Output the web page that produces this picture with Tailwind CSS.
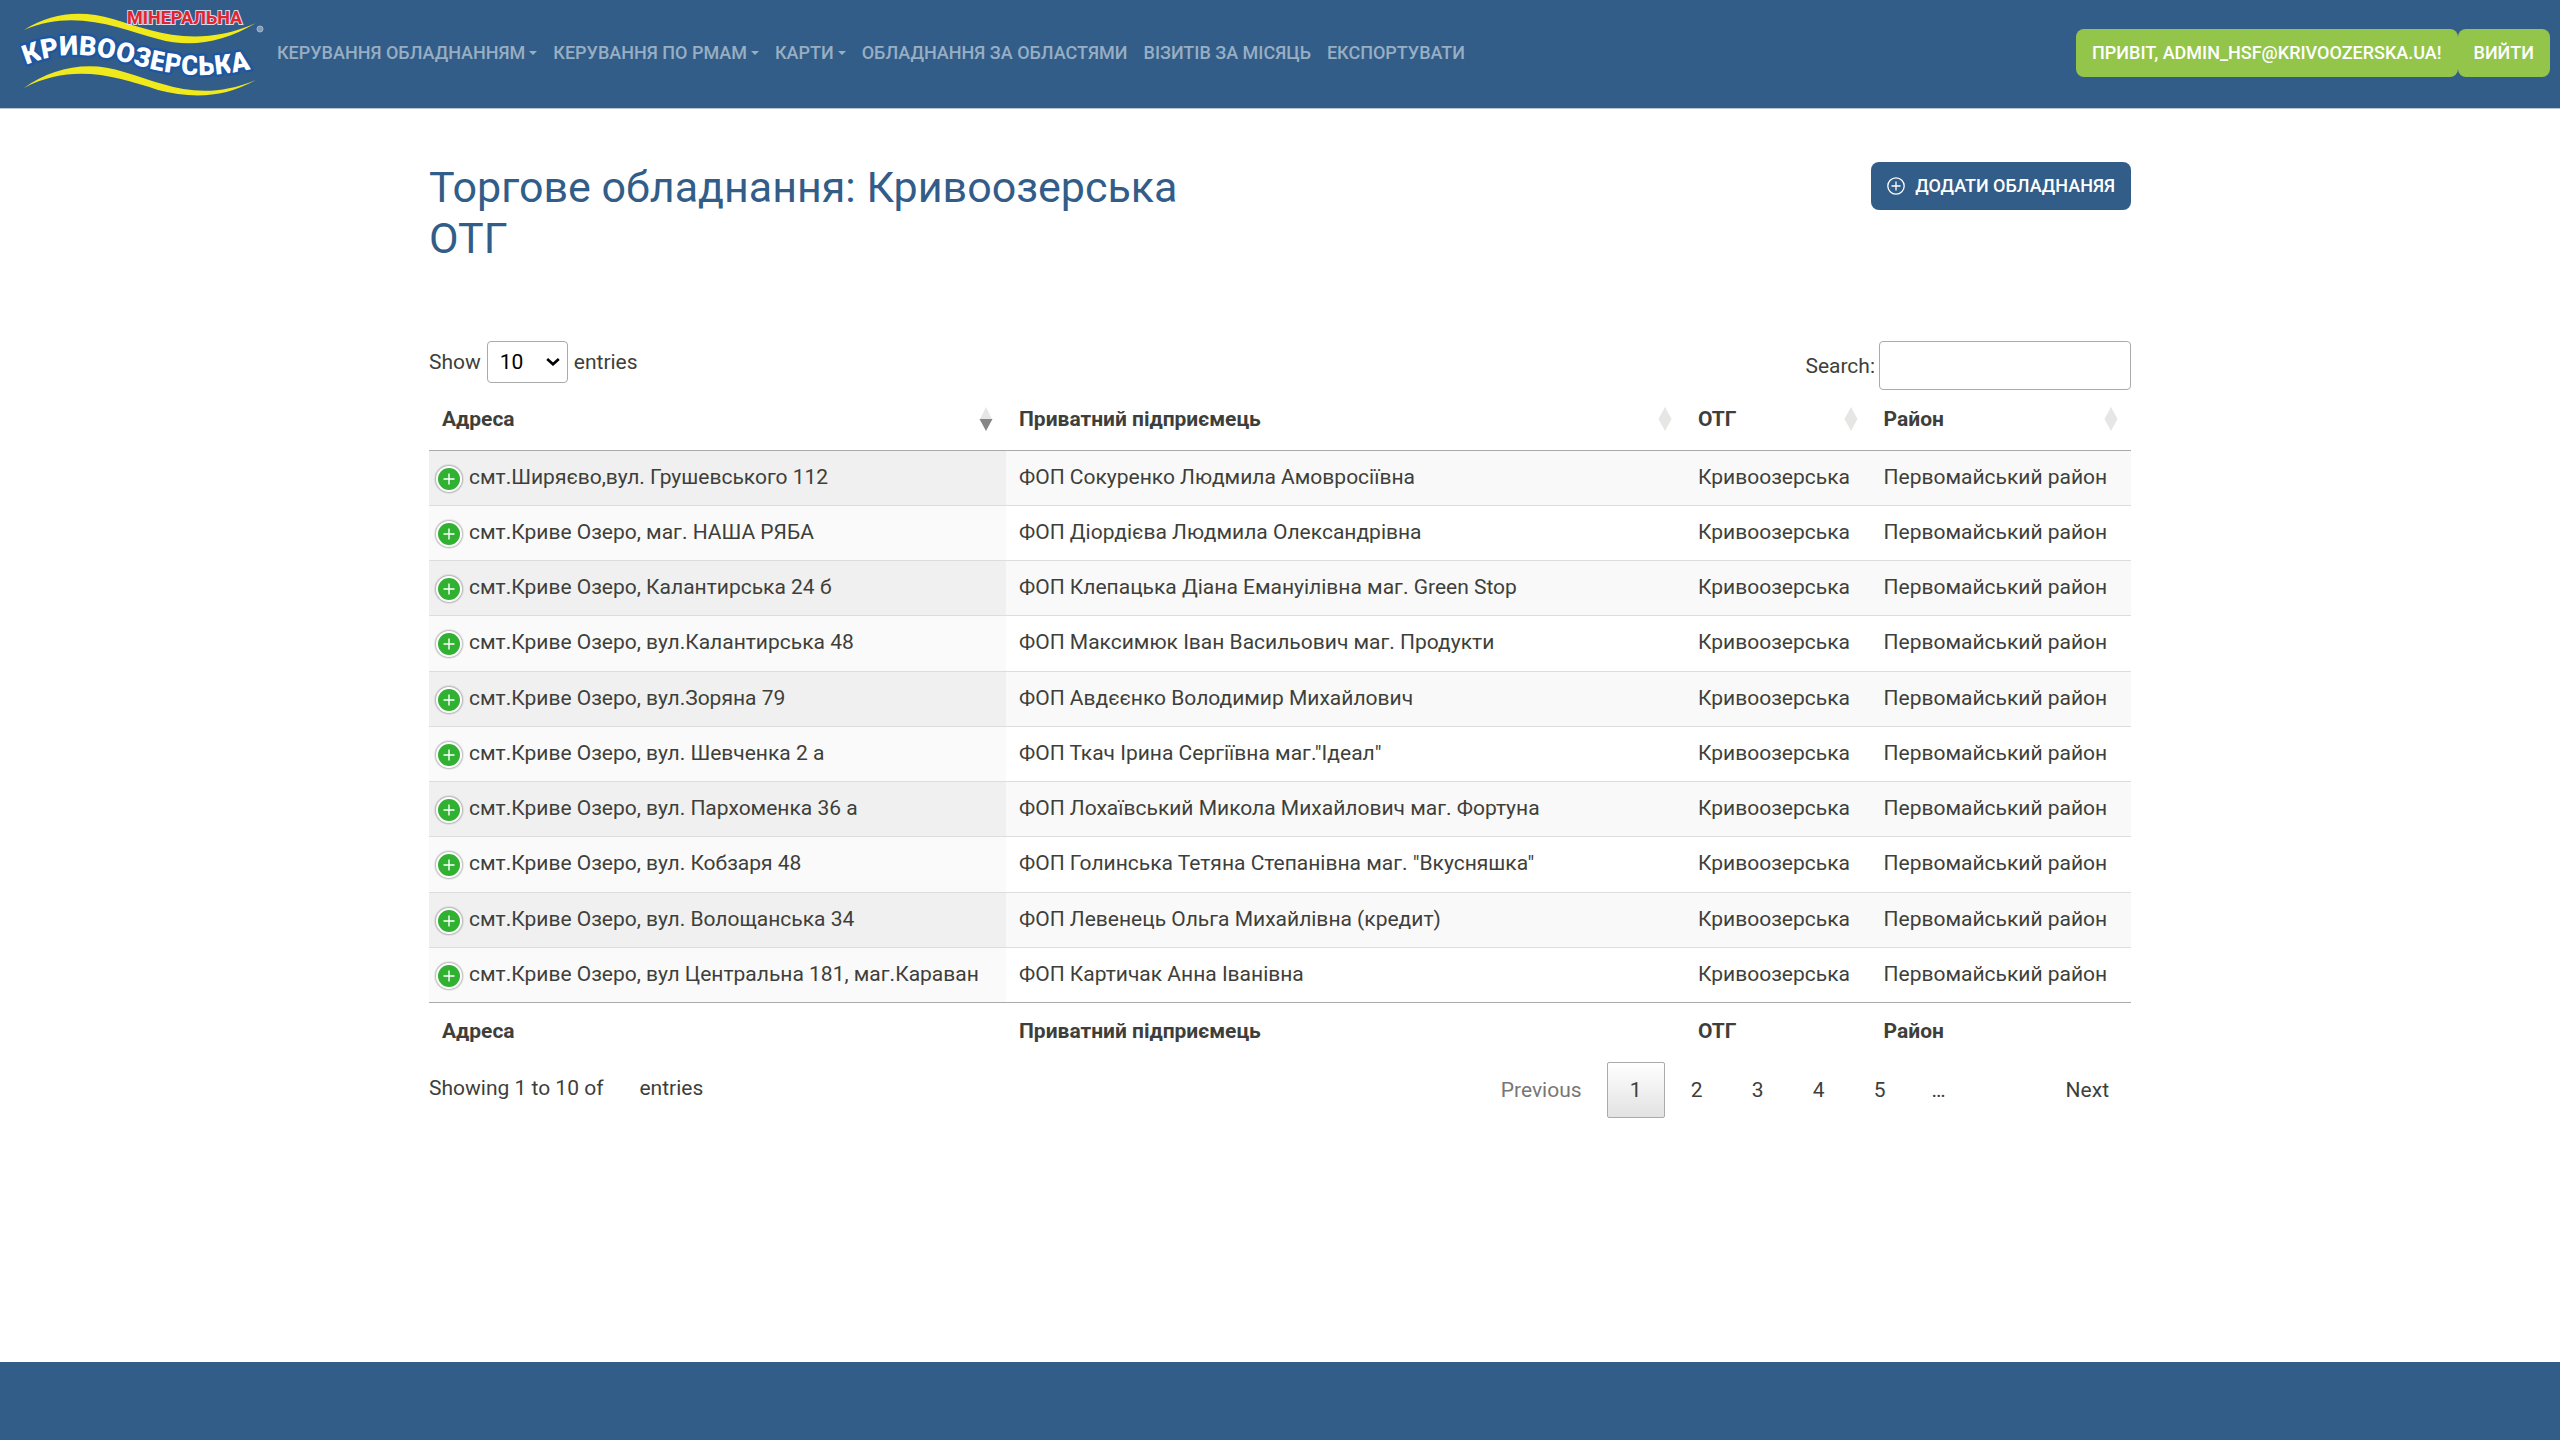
<!DOCTYPE html>
<html lang="uk">
<head>
<meta charset="utf-8">
<meta name="viewport" content="width=device-width, initial-scale=1">
<title>Торгове обладнання</title>
<script src="https://cdn.jsdelivr.net/npm/@tailwindcss/browser@4"></script>
</head>
<body class="flex min-h-screen flex-col bg-white font-['Roboto',sans-serif] text-[21px] leading-8 text-[#3e3f3a]">
<svg class="hidden" aria-hidden="true">
  <symbol id="sort" viewBox="0 0 14 24"><path d="M7 0 13.500 12 7 24 .5 12z" fill="#e6e6e5"/></symbol>
  <symbol id="sort-asc" viewBox="0 0 14 24"><path d="M7 0 13 12H1z" fill="#e6e6e5"/><path d="M.5 12h13L7 24z" fill="#868686"/></symbol>
  <symbol id="plus" viewBox="0 0 32 32"><circle cx="16" cy="16" r="15" fill="#444" opacity=".1"/><circle cx="16" cy="16" r="14" fill="#444" opacity=".22"/><circle cx="16" cy="16" r="13" fill="#fff"/><circle cx="16" cy="16" r="11" fill="#31b131"/><path d="M16 10.500v11M10.500 16h11" stroke="#fff" stroke-width="1.400"/></symbol>
</svg>

<header class="flex h-[109px] items-center justify-between border-b border-[#b9c3d3] bg-[#325d88] pr-[10px] pb-0.5 pl-5 text-[18px] leading-6 font-medium uppercase">
  <div class="flex items-center">
    <a href="#" aria-label="Кривоозерська" class="block">
      <svg class="h-[96px] w-[246px]" viewBox="20 5 246 96">
        <defs>
          <path id="wave" d="M26 65C56 52 90 52 128 63S206 82 262 66"/>
        </defs>
        <path d="M24 30C52 12 82 10 113 19C150 30 195 50 256 23C222 43 190 48 158 39C120 29 75 8 24 30Z" fill="#f0e91c"/>
        <path d="M24 88C52 68 88 60 124 72C165 84 200 103 256 80C222 99 190 98 158 90C115 76 72 63 24 88Z" fill="#f0e91c"/>
        <text font-family="Roboto, sans-serif" font-size="27" font-weight="900" fill="#fff" stroke="#1e56a0" stroke-width="5" stroke-linejoin="round" paint-order="stroke"><textPath href="#wave">КРИВООЗЕРСЬКА</textPath></text>
        <text x="127" y="24" font-family="Roboto, sans-serif" font-size="18" font-weight="700" fill="#e3232e" stroke="#d9dce8" stroke-width="2" paint-order="stroke">МІНЕРАЛЬНА</text>
        <circle cx="260" cy="29" r="3" fill="#7f9bb8" stroke="#a3b6ca"/>
      </svg>
    </a>
    <nav class="flex items-center gap-4 pl-[11px] text-[#98aec3]">
      <a href="#" class="flex items-center gap-1">Керування обладнанням<svg class="h-1 w-2" viewBox="0 0 8 4"><path d="M0 0h8L4 4z" fill="currentColor"/></svg></a>
      <a href="#" class="flex items-center gap-1">Керування по РМАМ<svg class="h-1 w-2" viewBox="0 0 8 4"><path d="M0 0h8L4 4z" fill="currentColor"/></svg></a>
      <a href="#" class="flex items-center gap-1">Карти<svg class="h-1 w-2" viewBox="0 0 8 4"><path d="M0 0h8L4 4z" fill="currentColor"/></svg></a>
      <a href="#">Обладнання за областями</a>
      <a href="#">Візитів за місяць</a>
      <a href="#">Експортувати</a>
    </nav>
  </div>
  <div class="flex text-white">
    <a href="#" class="rounded-lg bg-[#93c54b] px-4 py-3">Привіт, admin_hsf@krivoozerska.ua!</a>
    <button type="button" class="rounded-lg bg-[#93c54b] px-4 py-3 uppercase">Вийти</button>
  </div>
</header>

<main class="mx-auto w-full max-w-[1702px] flex-1 pt-[53px]">
  <div class="flex items-start justify-between">
    <h2 class="w-1/2 pr-6 text-[43px] leading-[51px] text-[#325d88]">Торгове обладнання: Кривоозерська ОТГ</h2>
    <button type="button" class="flex items-center gap-[10px] rounded-lg bg-[#325d88] px-4 py-3 text-[18px] leading-6 font-medium text-white uppercase">
      <svg class="size-[18px]" viewBox="0 0 18 18" fill="none" stroke="currentColor" stroke-width="1.300"><circle cx="9" cy="9" r="8.200"/><path d="M9 4.500v9M4.500 9h9"/></svg>
      Додати обладнаняя
    </button>
  </div>

  <div class="flex items-start justify-between pt-[77px]">
    <div class="flex items-center gap-[6px]">
      <label for="len">Show</label>
      <span class="relative flex items-center">
        <select id="len" class="h-[42px] w-[81px] appearance-none rounded border border-[#aaa] bg-transparent pl-3 text-black"><option>10</option><option>25</option><option>50</option><option>100</option></select>
        <svg class="pointer-events-none absolute right-2 h-2 w-[14px]" viewBox="0 0 14 8" fill="none" stroke="#000" stroke-width="2.600"><path d="M1.200 1 7 6.300 12.800 1"/></svg>
      </span>
      <label for="len">entries</label>
    </div>
    <div class="flex items-center gap-1">
      <label for="search">Search:</label>
      <input id="search" type="search" class="h-[49px] w-[252px] rounded border border-[#aaa] bg-transparent px-2">
    </div>
  </div>

  <table class="w-full table-fixed border-collapse text-left [&_td]:p-0 [&_td]:px-[13px] [&_td]:pb-0.5 [&_th]:px-[13px] [&_th]:font-bold [&_thead_th]:pb-0.5 [&_td]:whitespace-nowrap [&_tbody_tr]:h-[55px] [&_tbody_tr:nth-child(4n)]:h-[56px] [&_tbody_tr]:border-b [&_tbody_tr]:border-[#ddd] [&_tbody_tr:last-child]:border-[#aaa] [&_tbody_tr:nth-child(odd)]:bg-[#f9f9f9] [&_tbody_tr:nth-child(odd)_td:first-child]:bg-[#f0f0f0] [&_tbody_tr:nth-child(even)_td:first-child]:bg-[#fafafa] [&_td:first-child]:pl-1 [&_td_svg]:mt-1 [&_td_svg]:size-8 [&_td_div]:flex [&_td_div]:items-center [&_td_div]:gap-1 [&_thead_div]:flex [&_thead_div]:items-center [&_thead_div]:justify-between [&_thead_svg]:h-6 [&_thead_svg]:w-[14px]">
    <colgroup><col class="w-[33.9%]"><col class="w-[39.9%]"><col class="w-[10.9%]"><col class="w-[15.3%]"></colgroup>
    <thead>
      <tr class="h-[60px] border-b border-[#aaa]">
        <th scope="col"><div>Адреса<svg><use href="#sort-asc"/></svg></div></th>
        <th scope="col"><div>Приватний підприємець<svg><use href="#sort"/></svg></div></th>
        <th scope="col"><div>ОТГ<svg><use href="#sort"/></svg></div></th>
        <th scope="col"><div>Район<svg><use href="#sort"/></svg></div></th>
      </tr>
    </thead>
    <tbody>
      <tr><td><div><svg><use href="#plus"/></svg>смт.Ширяєво,вул. Грушевського 112</div></td><td>ФОП Сокуренко Людмила Амовросіївна</td><td>Кривоозерська</td><td>Первомайський район</td></tr>
      <tr><td><div><svg><use href="#plus"/></svg>смт.Криве Озеро, маг. НАША РЯБА</div></td><td>ФОП Діордієва Людмила Олександрівна</td><td>Кривоозерська</td><td>Первомайський район</td></tr>
      <tr><td><div><svg><use href="#plus"/></svg>смт.Криве Озеро, Калантирська 24 б</div></td><td>ФОП Клепацька Діана Емануілівна маг. Green Stop</td><td>Кривоозерська</td><td>Первомайський район</td></tr>
      <tr><td><div><svg><use href="#plus"/></svg>смт.Криве Озеро, вул.Калантирська 48</div></td><td>ФОП Максимюк Іван Васильович маг. Продукти</td><td>Кривоозерська</td><td>Первомайський район</td></tr>
      <tr><td><div><svg><use href="#plus"/></svg>смт.Криве Озеро, вул.Зоряна 79</div></td><td>ФОП Авдєєнко Володимир Михайлович</td><td>Кривоозерська</td><td>Первомайський район</td></tr>
      <tr><td><div><svg><use href="#plus"/></svg>смт.Криве Озеро, вул. Шевченка 2 а</div></td><td>ФОП Ткач Ірина Сергіївна маг."Ідеал"</td><td>Кривоозерська</td><td>Первомайський район</td></tr>
      <tr><td><div><svg><use href="#plus"/></svg>смт.Криве Озеро, вул. Пархоменка 36 а</div></td><td>ФОП Лохаївський Микола Михайлович маг. Фортуна</td><td>Кривоозерська</td><td>Первомайський район</td></tr>
      <tr><td><div><svg><use href="#plus"/></svg>смт.Криве Озеро, вул. Кобзаря 48</div></td><td>ФОП Голинська Тетяна Степанівна маг. "Вкусняшка"</td><td>Кривоозерська</td><td>Первомайський район</td></tr>
      <tr><td><div><svg><use href="#plus"/></svg>смт.Криве Озеро, вул. Волощанська 34</div></td><td>ФОП Левенець Ольга Михайлівна (кредит)</td><td>Кривоозерська</td><td>Первомайський район</td></tr>
      <tr><td><div><svg><use href="#plus"/></svg>смт.Криве Озеро, вул Центральна 181, маг.Караван</div></td><td>ФОП Картичак Анна Іванівна</td><td>Кривоозерська</td><td>Первомайський район</td></tr>
    </tbody>
    <tfoot>
      <tr class="h-[58px]"><th scope="col">Адреса</th><th scope="col">Приватний підприємець</th><th scope="col">ОТГ</th><th scope="col">Район</th></tr>
    </tfoot>
  </table>

  <div class="flex items-start justify-between">
    <p class="flex gap-9 pt-3"><span>Showing 1 to 10 of</span><span>entries</span></p>
    <nav class="flex gap-[3px] pt-[2px] [&_button]:h-14 [&_button]:min-w-[58px] [&_button]:px-[22px]" aria-label="Pagination">
      <button type="button" class="text-[#777]" disabled>Previous</button>
      <button type="button" class="rounded-xs border border-[#aaa] bg-linear-to-b from-white to-[#e2e2e2] px-5!">1</button>
      <button type="button" class="px-5!">2</button>
      <button type="button" class="px-5!">3</button>
      <button type="button" class="px-5!">4</button>
      <button type="button" class="px-5!">5</button>
      <span class="mr-[75px] w-[54px] pt-3 text-center">…</span>
      <button type="button">Next</button>
    </nav>
  </div>
</main>

<footer class="h-[78px] bg-[#325d88]"></footer>
</body>
</html>
